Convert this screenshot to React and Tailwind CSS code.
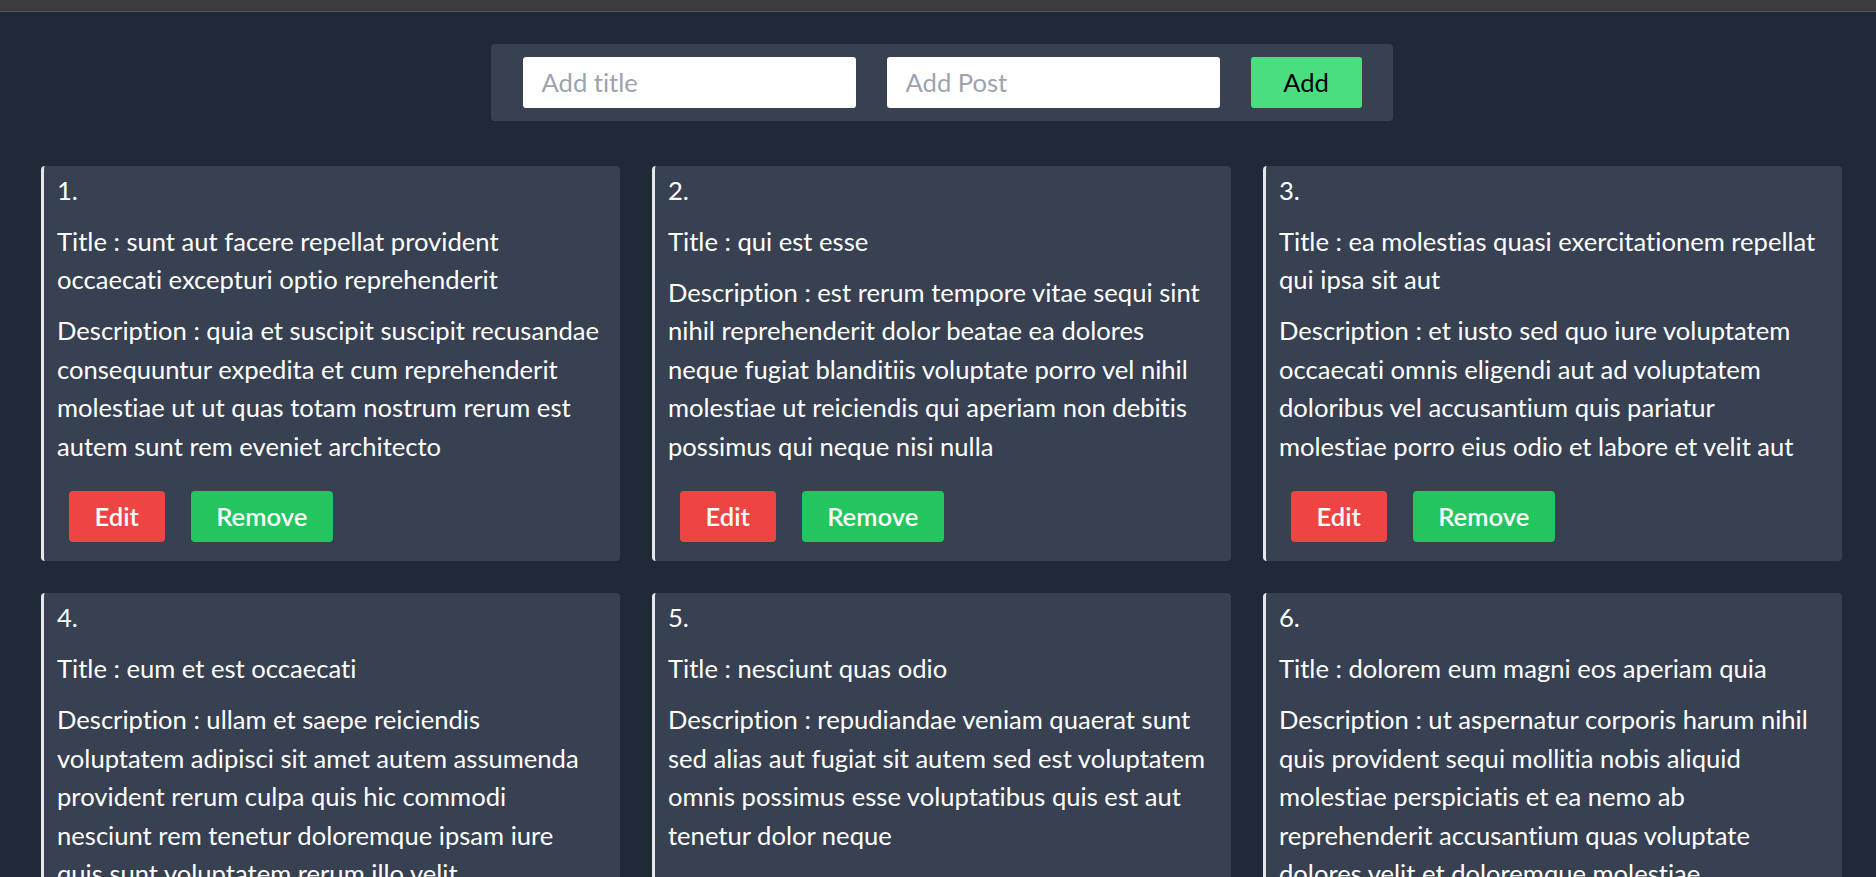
const posts = [
  {
    id: 1,
    title: "sunt aut facere repellat provident occaecati excepturi optio reprehenderit",
    body: "quia et suscipit suscipit recusandae consequuntur expedita et cum reprehenderit molestiae ut ut quas totam nostrum rerum est autem sunt rem eveniet architecto",
  },
  {
    id: 2,
    title: "qui est esse",
    body: "est rerum tempore vitae sequi sint nihil reprehenderit dolor beatae ea dolores neque fugiat blanditiis voluptate porro vel nihil molestiae ut reiciendis qui aperiam non debitis possimus qui neque nisi nulla",
  },
  {
    id: 3,
    title: "ea molestias quasi exercitationem repellat qui ipsa sit aut",
    body: "et iusto sed quo iure voluptatem occaecati omnis eligendi aut ad voluptatem doloribus vel accusantium quis pariatur molestiae porro eius odio et labore et velit aut",
  },
  {
    id: 4,
    title: "eum et est occaecati",
    body: "ullam et saepe reiciendis voluptatem adipisci sit amet autem assumenda provident rerum culpa quis hic commodi nesciunt rem tenetur doloremque ipsam iure quis sunt voluptatem rerum illo velit",
  },
  {
    id: 5,
    title: "nesciunt quas odio",
    body: "repudiandae veniam quaerat sunt sed alias aut fugiat sit autem sed est voluptatem omnis possimus esse voluptatibus quis est aut tenetur dolor neque",
  },
  {
    id: 6,
    title: "dolorem eum magni eos aperiam quia",
    body: "ut aspernatur corporis harum nihil quis provident sequi mollitia nobis aliquid molestiae perspiciatis et ea nemo ab reprehenderit accusantium quas voluptate dolores velit et doloremque molestiae",
  },
];

function Card({ post }) {
  return (
    <div className="flex flex-col rounded-[4px] border-l-[3px] border-[#e5e7eb] bg-[#374151] pl-[13px] pr-[16px] pt-[5px] pb-[19px] text-[25.6px] leading-[38.4px] text-white">
      <p>{post.id}.</p>
      <p className="mt-[12.8px]">Title : {post.title}</p>
      <p className="mt-[12.8px]">Description : {post.body}</p>
      <div className="mt-auto flex gap-[26px] pl-[12px] pt-[26px]">
        <button className="h-[51px] rounded-[4px] bg-[#ef4444] px-[25.6px] font-semibold text-white">
          Edit
        </button>
        <button className="h-[51px] rounded-[4px] bg-[#22c55e] px-[25.6px] font-semibold text-white">
          Remove
        </button>
      </div>
    </div>
  );
}

export default function App() {
  return (
    <div className="min-h-screen bg-[#1f2937] font-['Lato',sans-serif] [font-variant-ligatures:none]">
      <div className="h-[12px] border-b border-[#555555] bg-[#3c3c3c]" />
      <div className="ml-[41px] w-[1801px] pb-[40px]">
        <div className="mx-auto mt-[32px] flex w-[902px] items-center justify-between rounded-[4px] bg-[#374151] py-[12.8px] pl-[32px] pr-[31px]">
          <input
            className="h-[51px] w-[333px] rounded-[3px] bg-white px-[19px] text-[25.6px] text-black outline-none placeholder:text-[#9ca3af]"
            placeholder="Add title"
          />
          <input
            className="h-[51px] w-[333px] rounded-[3px] bg-white px-[19px] text-[25.6px] text-black outline-none placeholder:text-[#9ca3af]"
            placeholder="Add Post"
          />
          <button className="h-[51px] w-[111px] rounded-[3px] bg-[#4ade80] text-[25.6px] text-black">
            Add
          </button>
        </div>
        <div className="mt-[45px] grid grid-cols-3 gap-[32px]">
          {posts.map((p) => (
            <Card key={p.id} post={p} />
          ))}
        </div>
      </div>
    </div>
  );
}
